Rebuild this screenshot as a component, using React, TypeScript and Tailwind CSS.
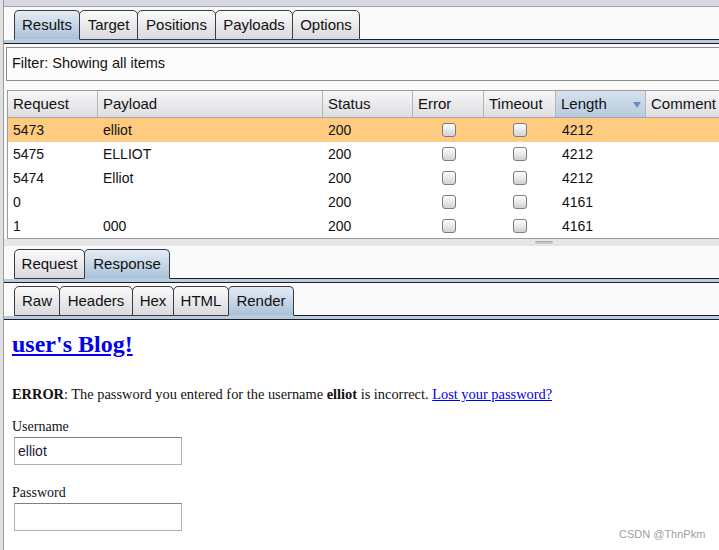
import React from "react";

type Tab = { label: string; w: number };

// widths include the 1px that overlaps the previous tab's border
const topTabs: Tab[] = [
  { label: "Results", w: 66 },
  { label: "Target", w: 59 },
  { label: "Positions", w: 79 },
  { label: "Payloads", w: 78 },
  { label: "Options", w: 68 },
];
const msgTabs: Tab[] = [
  { label: "Request", w: 71 },
  { label: "Response", w: 86 },
];
const viewTabs: Tab[] = [
  { label: "Raw", w: 46 },
  { label: "Headers", w: 74 },
  { label: "Hex", w: 42 },
  { label: "HTML", w: 56 },
  { label: "Render", w: 66 },
];

const rows = [
  { req: "5473", payload: "elliot", status: "200", len: "4212", hl: true },
  { req: "5475", payload: "ELLIOT", status: "200", len: "4212" },
  { req: "5474", payload: "Elliot", status: "200", len: "4212" },
  { req: "0", payload: "", status: "200", len: "4161" },
  { req: "1", payload: "000", status: "200", len: "4161" },
];

function TabBar({ tabs, active }: { tabs: Tab[]; active: string }) {
  return (
    <div>
      <div className="flex items-end pl-[10px] h-[30px]">
        {tabs.map((t, i) => {
          const on = t.label === active;
          return (
            <div
              key={t.label}
              style={{ width: t.w }}
              className={
                "h-[30px] flex items-center justify-center text-[15px] text-[#111] rounded-t-[5px] border border-[#3a3a44] " +
                (i > 0 ? "-ml-px " : "") +
                (on
                  ? "border-b-[#b8cce0] bg-gradient-to-b from-[#e4ecf4] to-[#aac2da] relative z-10"
                  : "bg-gradient-to-b from-[#fbfbfb] to-[#d9d9de]")
              }
            >
              {t.label}
            </div>
          );
        })}
        <div className="flex-1 h-[30px] border-b border-[#1c1c28]" />
      </div>
      <div className="h-[4px] bg-[#b8cce0] border-b border-[#1c1c28]" />
    </div>
  );
}

function Check() {
  return (
    <div className="w-[14px] h-[14px] rounded-[3px] border border-[#7c7c80] bg-gradient-to-b from-[#ffffff] to-[#d2d2d6]" />
  );
}

const cols = [
  { name: "Request", w: "w-[90px]" },
  { name: "Payload", w: "w-[225px]" },
  { name: "Status", w: "w-[90px]" },
  { name: "Error", w: "w-[71px]" },
  { name: "Timeout", w: "w-[72px]" },
  { name: "Length", w: "w-[90px]" },
  { name: "Comment", w: "flex-1" },
];

export default function App() {
  return (
    <div className="relative w-[719px] h-[550px] overflow-hidden flex bg-[#fafafa] font-['Liberation_Sans',Arial,sans-serif]">
      <div className="w-[3px] bg-[#e0e0e0]" />
      <div className="flex-1 flex flex-col border-l border-[#9c9ca0] min-w-0">
        <div className="h-[7px] bg-[#d6d9e0] border-b border-[#9ea2ac]" />

        <div className="mt-[3px]">
          <TabBar tabs={topTabs} active="Results" />
        </div>

        <div className="mt-[3px] ml-[2px] -mr-2 h-[34px] border border-[#8c8c8c] bg-[#fcfcfc] flex items-center pl-[5px] text-[14.5px] text-[#111]">
          Filter: Showing all items
        </div>

        <div className="mt-[9px] ml-[3px] -mr-2 border-t border-l border-b border-[#9a9a9e] bg-white">
          <div className="flex h-[27px] border-b border-[#a4a4a8] text-[15px] text-[#111]">
            {cols.map((c, i) => (
              <div
                key={c.name}
                className={
                  c.w +
                  " flex items-center pl-[5px] relative " +
                  (i < cols.length - 1 ? "border-r border-[#b4b4b8] " : "") +
                  (c.name === "Length"
                    ? "bg-gradient-to-b from-[#d6e2ee] to-[#b6cadd]"
                    : "bg-gradient-to-b from-[#f6f6f7] to-[#dedee2]")
                }
              >
                {c.name}
                {c.name === "Length" && (
                  <svg className="absolute right-[4px] top-[11px]" width="8" height="6" viewBox="0 0 8 6">
                    <path d="M0 0 L8 0 L4 6 Z" fill="#6a8db2" />
                  </svg>
                )}
              </div>
            ))}
          </div>
          {rows.map((r) => (
            <div
              key={r.req}
              className={"flex h-[24px] items-center text-[14px] text-[#111] " + (r.hl ? "bg-[#fecb80]" : "bg-white")}
            >
              <div className="w-[90px] pl-[5px]">{r.req}</div>
              <div className="w-[225px] pl-[5px]">{r.payload}</div>
              <div className="w-[90px] pl-[5px]">{r.status}</div>
              <div className="w-[71px] flex justify-center pl-[1px]">
                <Check />
              </div>
              <div className="w-[72px] flex justify-center">
                <Check />
              </div>
              <div className="w-[90px] pl-[6px]">{r.len}</div>
              <div className="flex-1" />
            </div>
          ))}
        </div>

        <div className="h-[7px] bg-[#e6e6e8] flex justify-end pr-[166px] pt-[2px]">
          <div className="w-[18px] h-[3px] rounded-[2px] bg-[#c8c8cc] border-t border-[#a8a8ac]" />
        </div>

        <div className="mt-[3px]">
          <TabBar tabs={msgTabs} active="Response" />
        </div>
        <div className="mt-[3px]">
          <TabBar tabs={viewTabs} active="Render" />
        </div>

        <div className="flex-1 bg-white pl-[8px] pt-[10px] font-['Liberation_Serif','Times_New_Roman',serif] text-[#111]">
          <div className="text-[24px] leading-[28px] font-bold text-[#0000ee] underline underline-offset-[2px]">
            user's Blog!
          </div>
          <p className="mt-[27px] text-[14.4px] leading-[18px]">
            <b>ERROR</b>: The password you entered for the username <b>elliot</b> is incorrect.{" "}
            <span className="text-[#0000ee] underline">Lost your password?</span>
          </p>
          <div className="mt-[15px] text-[14px] leading-[18px]">Username</div>
          <div className="mt-[1px] ml-[2px] w-[168px] h-[28px] border border-[#b0b0b0] border-t-[#808080] flex items-center pl-[3px] font-['Liberation_Sans',Arial,sans-serif] text-[14px] text-[#1a1a30]">
            elliot
          </div>
          <div className="mt-[19px] text-[14px] leading-[18px]">Password</div>
          <div className="mt-[1px] ml-[2px] w-[168px] h-[28px] border border-[#b0b0b0] border-t-[#808080]" />
        </div>
      </div>

      <div className="absolute left-[619px] top-[528px] text-[11px] leading-[13px] text-[#a0a0a0] font-['Liberation_Sans',Arial,sans-serif]">
        CSDN @ThnPkm
      </div>
    </div>
  );
}
